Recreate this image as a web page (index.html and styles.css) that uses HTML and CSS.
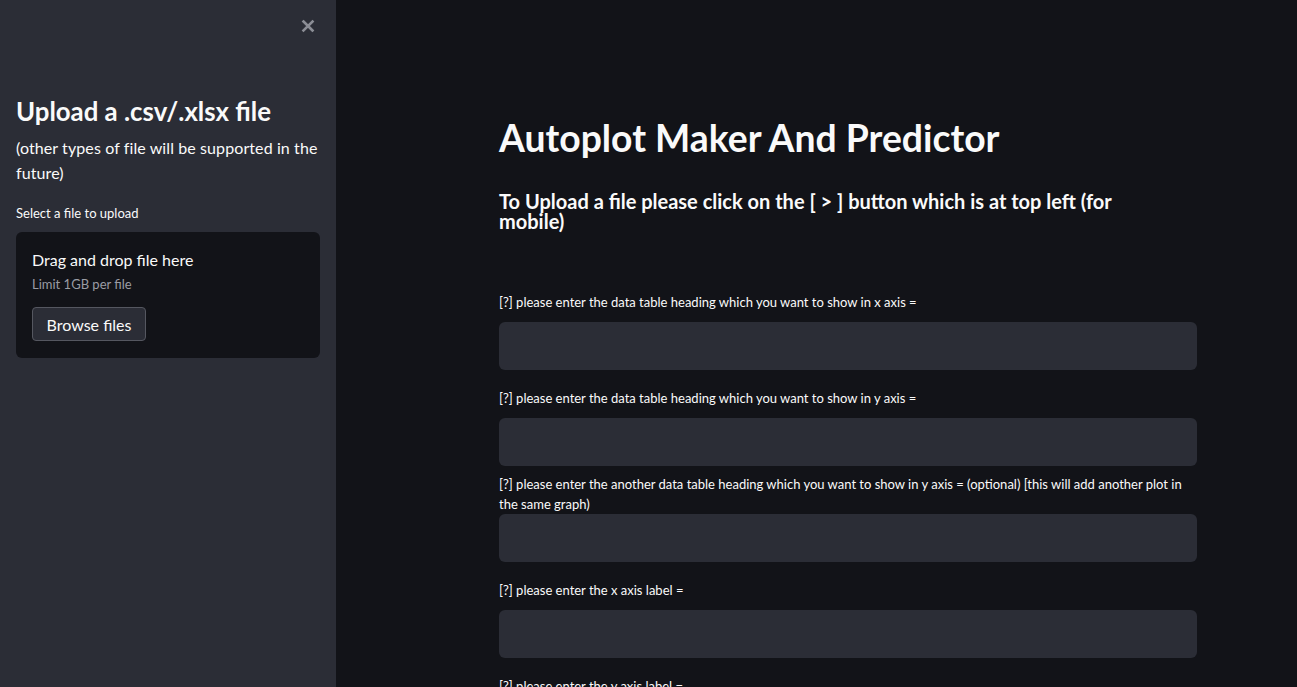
FILE: index.html
```html
<!DOCTYPE html>
<html lang="en">
<head>
<meta charset="utf-8">
<title>Autoplot Maker And Predictor</title>
<link rel="stylesheet" href="styles.css">
</head>
<body>
<div class="app">
  <aside class="sidebar">
    <div class="sidebar-top">
      <button class="close-btn" aria-label="Close sidebar">
        <svg width="14" height="14" viewBox="0 0 14 14"><path d="M2.5 2.5 L11.5 11.5 M11.5 2.5 L2.5 11.5" stroke="#8b8d95" stroke-width="2.6" stroke-linecap="square"/></svg>
      </button>
    </div>
    <div class="sidebar-content">
      <h2 class="side-title">Upload a .csv/.xlsx file</h2>
      <p class="side-note">(other types of file will be supported in the future)</p>
      <div class="uploader">
        <div class="uploader-label">Select a file to upload</div>
        <div class="dropzone">
          <div class="dz-title">Drag and drop file here</div>
          <div class="dz-limit">Limit 1GB per file</div>
          <button class="browse-btn">Browse files</button>
        </div>
      </div>
    </div>
  </aside>
  <main class="main">
    <div class="block">
      <h1 class="title">Autoplot Maker And Predictor</h1>
      <h3 class="subtitle">To Upload a file please click on the [ &gt; ] button which is at top left (for mobile)</h3>
      <div class="fields">
        <div class="field">
          <label class="field-label">[?] please enter the data table heading which you want to show in x axis =</label>
          <div class="input"></div>
        </div>
        <div class="field">
          <label class="field-label">[?] please enter the data table heading which you want to show in y axis =</label>
          <div class="input"></div>
        </div>
        <div class="field">
          <label class="field-label">[?] please enter the another data table heading which you want to show in y axis = (optional) [this will add another plot in the same graph)</label>
          <div class="input"></div>
        </div>
        <div class="field">
          <label class="field-label">[?] please enter the x axis label =</label>
          <div class="input"></div>
        </div>
        <div class="field">
          <label class="field-label">[?] please enter the y axis label =</label>
          <div class="input"></div>
        </div>
      </div>
    </div>
  </main>
</div>
</body>
</html>
```

FILE: styles.css
```css
* { box-sizing: border-box; }
html, body {
  margin: 0;
  padding: 0;
  height: 100%;
  overflow: hidden;
}
body {
  font-family: "Lato", "Noto Sans", sans-serif;
  color: #fafafa;
  background: #121318;
}
.app {
  display: flex;
  height: 687px;
}
.sidebar {
  width: 336px;
  flex: 0 0 336px;
  background: #2b2d36;
  display: flex;
  flex-direction: column;
}
.sidebar-top {
  display: flex;
  justify-content: flex-end;
  padding: 19px 21px 0 0;
  height: 90px;
}
.close-btn {
  background: none;
  border: none;
  padding: 0;
  width: 14px;
  height: 14px;
  display: flex;
  cursor: pointer;
}
.sidebar-content {
  padding: 0 16px;
}
.side-title {
  margin: 0;
  font-size: 25.8px;
  font-weight: 700;
  line-height: 42px;
}
.side-note {
  margin: 3px 0 0;
  font-size: 16px;
  letter-spacing: 0.1px;
  line-height: 25px;
}
.uploader {
  margin-top: 19px;
}
.uploader-label {
  font-size: 13px;
  line-height: 18px;
  margin-bottom: 10px;
}
.dropzone {
  background: #121318;
  border-radius: 6px;
  padding: 16px;
  height: 126px;
}
.dz-title {
  font-size: 16px;
  line-height: 24px;
}
.dz-limit {
  font-size: 13px;
  color: #9a9ca4;
  line-height: 16px;
  margin-top: 4px;
}
.browse-btn {
  display: block;
  margin-top: 15px;
  font-family: inherit;
  font-size: 16px;
  color: #fafafa;
  background: #2b2d36;
  border: 1px solid #555760;
  border-radius: 4px;
  height: 34px;
  width: 114px;
  padding: 0;
}
.main {
  flex: 1;
  display: flex;
  padding-left: 163px;
}
.block {
  width: 698px;
  padding-top: 112px;
}
.title {
  margin: 0;
  font-size: 37.3px;
  font-weight: 700;
  line-height: 52px;
}
.subtitle {
  margin: 27px 0 0;
  padding-right: 40px;
  font-size: 20px;
  font-weight: 700;
  line-height: 20px;
}
.fields {
  margin-top: 43px;
  display: flex;
  flex-direction: column;
}
.field {
  padding-top: 8px;
  display: flex;
  flex-direction: column;
}
.field-label {
  height: 40px;
  display: flex;
  align-items: center;
  font-size: 13px;
  line-height: 20px;
}
.input {
  height: 48px;
  background: #2b2d36;
  border-radius: 6px;
}
```
